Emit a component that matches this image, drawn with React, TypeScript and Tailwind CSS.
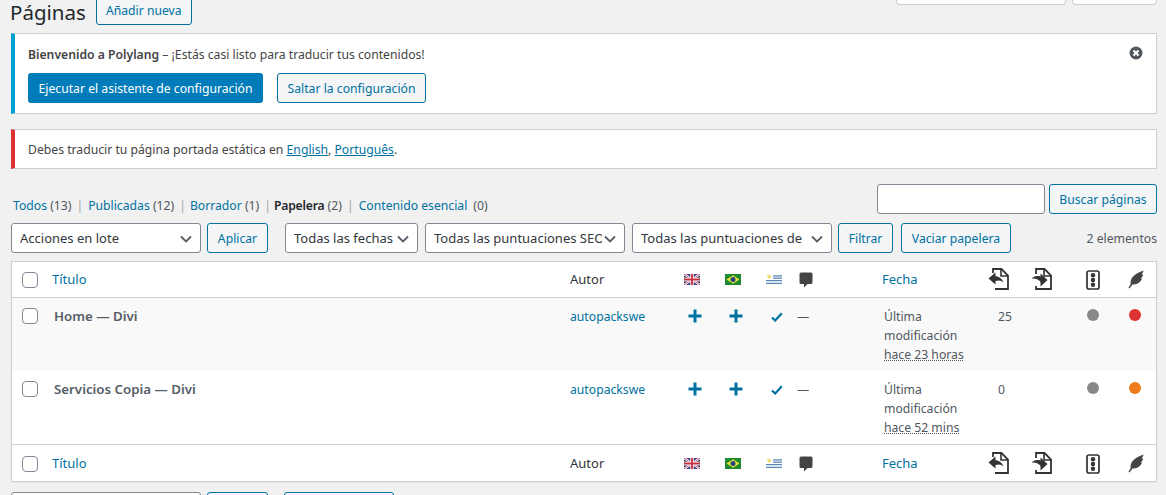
const font = "font-['Noto_Sans',sans-serif]";
const rowGrid = 'grid grid-cols-[40px_518px_102px_41px_41px_41px_87px_106px_43px_54px_42px_1fr]';
const btn = 'h-[30px] flex items-center justify-center pt-[2px] rounded-[3px] border border-[#0071a1] bg-[#f3f5f6] text-[#0071a1] text-[12.2px]';
const selectBox = 'h-[30px] flex items-center pt-[2px] rounded-[3px] border border-[#7e8993] bg-white text-[#32373c] text-[13px] overflow-hidden';

function Chevron() {
  return (
    <svg width="16" height="16" viewBox="0 0 16 16" className="shrink-0">
      <path d="M3 5.500l5 5 5-5" fill="none" stroke="#555d66" strokeWidth="1.800" />
    </svg>
  );
}

function Select({ label, width }: { label: string; width: string }) {
  return (
    <div className={`${selectBox} ${width} pl-[8px] pr-[6px] justify-between`}>
      <span className="whitespace-nowrap overflow-hidden">{label}</span>
      <Chevron />
    </div>
  );
}

function Check() {
  return (
    <div className="flex justify-start pl-[10px]">
      <div className="w-[16px] h-[16px] rounded-[4px] border border-[#7e8993] bg-white" />
    </div>
  );
}

function FlagUK() {
  return (
    <svg width="16" height="11" viewBox="0 0 16 11">
      <rect width="16" height="11" fill="#3a4580" />
      <path d="M0 0l16 11M16 0L0 11" stroke="#fff" strokeWidth="2.200" />
      <path d="M0 0l16 11M16 0L0 11" stroke="#c8405a" strokeWidth="0.800" />
      <path d="M8 0v11M0 5.500h16" stroke="#fff" strokeWidth="3.400" />
      <path d="M8 0v11M0 5.500h16" stroke="#c8303f" strokeWidth="1.800" />
    </svg>
  );
}

function FlagBR() {
  return (
    <svg width="16" height="11" viewBox="0 0 16 11">
      <rect width="16" height="11" fill="#1d8a2f" />
      <path d="M8 1.200L14.500 5.500 8 9.800 1.500 5.500z" fill="#e8e23c" />
      <circle cx="8" cy="5.500" r="2.500" fill="#27437f" />
    </svg>
  );
}

function FlagUY() {
  return (
    <svg width="16" height="11" viewBox="0 0 16 11">
      <rect width="16" height="11" fill="#fff" />
      <path d="M0 1.800h16M0 4.200h16M0 6.600h16M0 9.400h16" stroke="#5b86b8" strokeWidth="1.200" />
      <rect width="7" height="6" fill="#fff" />
      <circle cx="3.200" cy="2.800" r="2" fill="#ecdf7a" />
    </svg>
  );
}

function Comment() {
  return (
    <svg width="14" height="16" viewBox="0 0 14 16">
      <path d="M2 0.500h10A1.500 1.500 0 0 1 13.500 2v8.500A1.500 1.500 0 0 1 12 12H8.500L5 15.500V12H2A1.500 1.500 0 0 1 .5 10.500V2A1.500 1.500 0 0 1 2 .5z" fill="#444" />
    </svg>
  );
}

function LinkIn() {
  return (
    <svg width="21" height="22" viewBox="0 0 21 22" className="-mt-[1px]">
      <path d="M5 5V1h8.500L20 7.500V21H7" fill="none" stroke="#333" strokeWidth="1.800" />
      <path d="M13 1v7h7" fill="none" stroke="#333" strokeWidth="1.600" />
      <path d="M.5 10.500L7.500 4.500V8c3.500.5 6.500 2.500 8 6.500-1.500-1.300-3-2-5-2-1 0-2 .2-3 .5v3.500z" fill="#333" />
    </svg>
  );
}

function LinkOut() {
  return (
    <svg width="21" height="22" viewBox="0 0 21 22" className="-mt-[1px]">
      <path d="M5 6V1h8.500L20 7.500V21H5v-3" fill="none" stroke="#333" strokeWidth="1.800" />
      <path d="M13 1v7h7" fill="none" stroke="#333" strokeWidth="1.600" />
      <path d="M.5 10.500C3 8.200 6.500 7.500 9.500 8.500V5.500L16.500 12l-7 6.500V14C8 11.500 4.500 10 .5 10.500z" fill="#333" />
    </svg>
  );
}

function Traffic() {
  return (
    <svg width="16" height="20" viewBox="0 0 16 20">
      <rect x="2" y="1" width="12" height="18" rx="2" fill="none" stroke="#333" strokeWidth="1.700" />
      <circle cx="8" cy="5.200" r="2.200" fill="#333" />
      <circle cx="8" cy="10" r="2.200" fill="#333" />
      <circle cx="8" cy="14.800" r="2.200" fill="#333" />
    </svg>
  );
}

function Quill() {
  return (
    <svg width="18" height="20" viewBox="0 0 18 20">
      <path d="M16.500 .5c-.2 1.500-.8 2.500-2 3.800.8.300 1.300.300 1.800.200-.5 1.700-1.500 3-2.800 4 .7.200 1.200.200 1.700.1-1 2.300-2.700 4-5 5.100-1.500.7-3 .9-4.700.7L2.500 18.500l-1-.8 2.200-3.600C3.300 11.500 4 8.700 6 6.500 8.500 3.800 12.500 2 16.500 .5z" fill="#444" />
    </svg>
  );
}

function Plus() {
  return (
    <svg width="14" height="14" viewBox="0 0 14 14">
      <path d="M7 .5v13M.5 7h13" stroke="#0071a1" strokeWidth="3" />
    </svg>
  );
}

function Tick() {
  return (
    <svg width="12" height="10" viewBox="0 0 12 10">
      <path d="M1 5.500l3.200 3L10.800 1.200" fill="none" stroke="#0071a1" strokeWidth="2.200" />
    </svg>
  );
}

function Close() {
  return (
    <svg width="14" height="14" viewBox="0 0 14 14">
      <circle cx="7" cy="7" r="6.500" fill="#50575e" />
      <path d="M4.500 4.500l5 5M9.500 4.500l-5 5" stroke="#fff" strokeWidth="2" />
    </svg>
  );
}

function HeadRow({ border, height }: { border: string; height: string }) {
  return (
    <div className={`${rowGrid} ${height} items-center text-[13px] ${border}`}>
      <Check />
      <span className="text-[#0071a1]">Título</span>
      <span className="text-[#32373c]">Autor</span>
      <div className="flex justify-center pr-[2px]"><FlagUK /></div>
      <div className="flex justify-center pr-[2px]"><FlagBR /></div>
      <div className="flex justify-center pr-[2px]"><FlagUY /></div>
      <div className="pl-[4px]"><Comment /></div>
      <span className="text-[#0071a1]">Fecha</span>
      <LinkIn />
      <LinkOut />
      <Traffic />
      <Quill />
    </div>
  );
}

function PageRow({ title, seo, links, ago, bg }: { title: string; seo: string; links: string; ago: string; bg: string }) {
  return (
    <div className={`${rowGrid} h-[73px] text-[12.2px] pt-[8px] ${bg}`}>
      <div className="pt-[2px]"><Check /></div>
      <span className="pl-[2px] text-[13.300px] font-semibold text-[#555d66] leading-[20px]">{title}</span>
      <span className="pt-[1px] text-[#0071a1] leading-[20px]">autopackswe</span>
      <div className="flex justify-center pl-[4px] pt-[3px]"><Plus /></div>
      <div className="flex justify-center pl-[4px] pt-[3px]"><Plus /></div>
      <div className="flex justify-center pl-[4px] pt-[6px]"><Tick /></div>
      <span className="pl-[2px] pt-[1px] text-[#50575e] leading-[20px]">—</span>
      <div className="pl-[2px] pt-[1px] text-[#50575e] leading-[19px]">
        <p>Última</p>
        <p>modificación</p>
        <p className="underline decoration-dotted">{ago}</p>
      </div>
      <span className="pl-[10px] pt-[1px] text-[#50575e] leading-[20px]">{links}</span>
      <span />
      <div className="pl-[2px] pt-[3px]"><div className="w-[12px] h-[12px] rounded-full bg-[#888888]" /></div>
      <div className="pl-[2px] pt-[3px]"><div className={`w-[12px] h-[12px] rounded-full ${seo}`} /></div>
    </div>
  );
}

export default function App() {
  return (
    <div className={`${font} h-[495px] overflow-hidden bg-[#f1f1f1] pl-[11px] pr-[9px] text-[12.2px] text-[#444]`}>
      <div className="flex h-[33px] items-start justify-between">
        <div className="flex items-start">
          <h1 className="-ml-[1px] text-[20.5px] leading-[25px] text-[#23282d]">Páginas</h1>
          <div className={`${btn} ml-[10px] -mt-[5px] h-[29px] w-[96px]`}>Añadir nueva</div>
        </div>
        <div className="flex gap-[6px]">
          <div className="h-[5px] w-[170px] rounded-b-[4px] border border-t-0 border-[#ccd0d4] bg-white" />
          <div className="h-[5px] w-[85px] rounded-b-[4px] border border-t-0 border-[#ccd0d4] bg-white" />
        </div>
      </div>

      <div className="h-[81px] border border-l-4 border-[#ccd0d4] border-l-[#00a0d2] bg-white pl-[13px] pr-[13px] pt-[10px]">
        <div className="flex justify-between">
          <p className="pt-[1px] leading-[20px] text-[#444]"><span className="font-semibold">Bienvenido a Polylang</span> – ¡Estás casi listo para traducir tus contenidos!</p>
          <div className="pt-[2px]"><Close /></div>
        </div>
        <div className="mt-[8px] flex gap-[14px]">
          <div className="h-[30px] w-[235px] flex items-center justify-center pt-[2px] rounded-[3px] bg-[#007cba] text-white">Ejecutar el asistente de configuración</div>
          <div className={`${btn} w-[149px]`}>Saltar la configuración</div>
        </div>
      </div>

      <div className="mt-[15px] h-[40px] flex items-center pt-[2px] border border-l-4 border-[#ccd0d4] border-l-[#dc3232] bg-white pl-[13px]">
        <p>Debes traducir tu página portada estática en <span className="text-[#0071a1] underline">English</span>, <span className="text-[#0071a1] underline">Português</span>.</p>
      </div>

      <div className="mt-[15px] flex h-[30px] items-center justify-between">
        <div className="pt-[14px] pl-[2px] flex gap-[5px] text-[#50575e] whitespace-nowrap">
          <span><span className="text-[#0071a1]">Todos</span> (13)</span><span className="text-[#a0a5aa]">|</span>
          <span><span className="text-[#0071a1]">Publicadas</span> (12)</span><span className="text-[#a0a5aa]">|</span>
          <span className="-ml-[1px]"><span className="text-[#0071a1]">Borrador</span> (1)</span><span className="text-[#a0a5aa]">|</span>
          <span className="-ml-[2px]"><span className="font-semibold text-[#23282d] tracking-[-0.2px]">Papelera</span> (2)</span><span className="text-[#a0a5aa]">|</span>
          <span className="flex gap-[6px]"><span className="text-[#0071a1]">Contenido esencial</span><span>(0)</span></span>
        </div>
        <div className="flex gap-[4px]">
          <div className="h-[30px] w-[168px] rounded-[3px] border border-[#7e8993] bg-white" />
          <div className={`${btn} w-[108px]`}>Buscar páginas</div>
        </div>
      </div>

      <div className="mt-[9px] flex h-[30px] items-center">
        <Select label="Acciones en lote" width="w-[190px]" />
        <div className={`${btn} ml-[6px] w-[61px]`}>Aplicar</div>
        <div className="ml-[17px]"><Select label="Todas las fechas" width="w-[133px]" /></div>
        <div className="ml-[7px]"><Select label="Todas las puntuaciones SEO" width="w-[200px]" /></div>
        <div className="ml-[7px]"><Select label="Todas las puntuaciones de" width="w-[200px]" /></div>
        <div className={`${btn} ml-[6px] w-[55px]`}>Filtrar</div>
        <div className={`${btn} ml-[8px] w-[110px]`}>Vaciar papelera</div>
        <span className="ml-auto pt-[2px] text-[#50575e]">2 elementos</span>
      </div>

      <div className="mt-[8px] border border-[#ccd0d4] bg-white shadow-[0_1px_1px_rgba(0,0,0,0.04)]">
        <HeadRow border="border-b border-[#ccd0d4]" height="h-[36px]" />
        <PageRow title="Home — Divi" seo="bg-[#dc3232]" links="25" ago="hace 23 horas" bg="bg-[#f9f9f9]" />
        <PageRow title="Servicios Copia — Divi" seo="bg-[#ee7c1b]" links="0" ago="hace 52 mins" bg="bg-white" />
        <HeadRow border="border-t border-[#ccd0d4] pt-[1px]" height="h-[37px]" />
      </div>

      <div className="mt-[10px] flex h-[30px]">
        <div className="h-[30px] w-[190px] rounded-[3px] border border-[#7e8993] bg-white" />
        <div className={`${btn} ml-[6px] w-[61px]`} />
        <div className={`${btn} ml-[16px] w-[110px]`} />
      </div>
    </div>
  );
}
